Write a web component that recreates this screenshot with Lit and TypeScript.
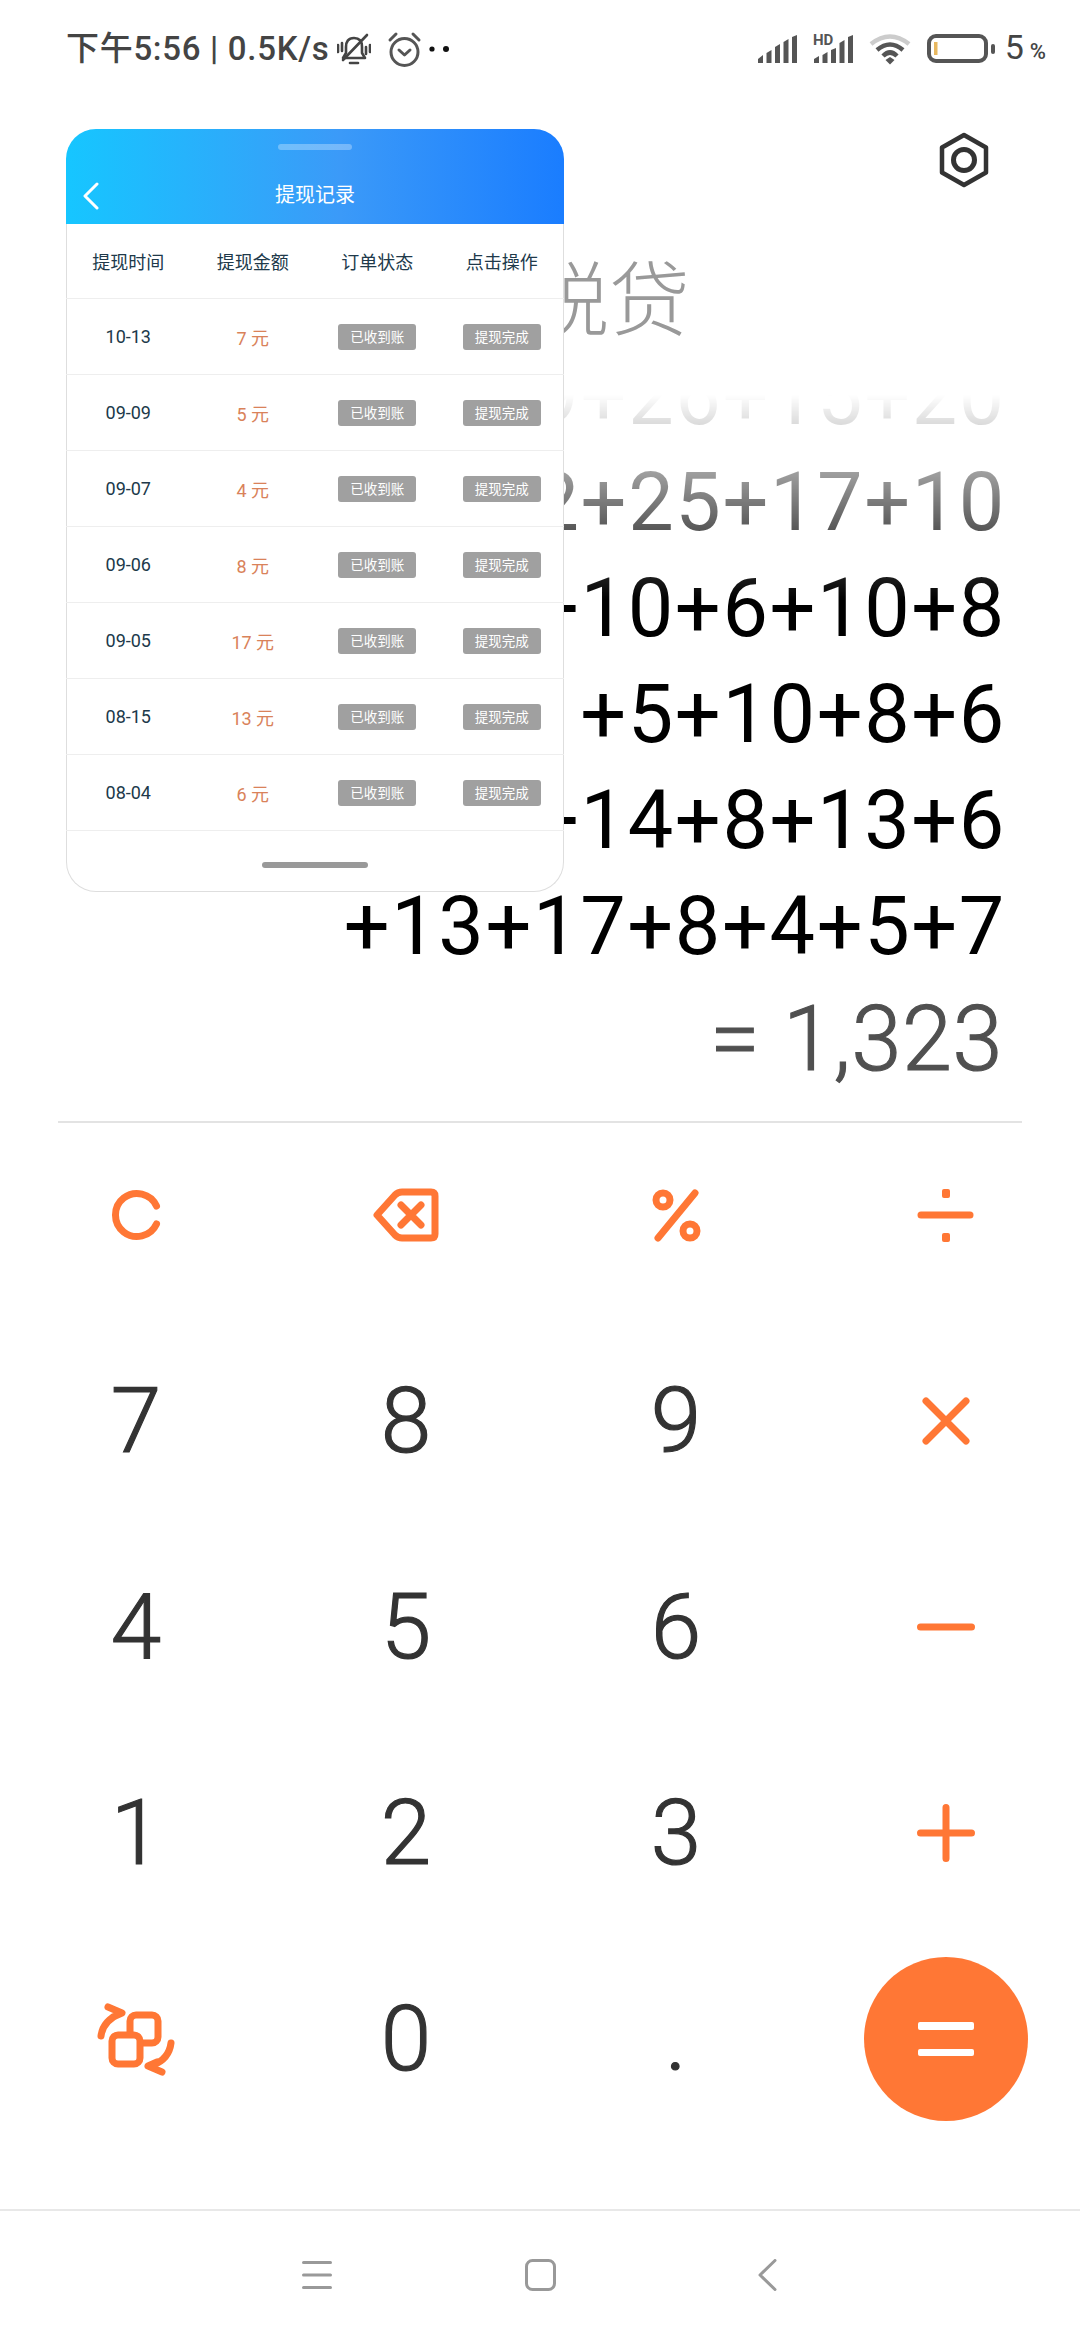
import { LitElement, html, css, svg } from "lit";
import { customElement } from "lit/decorators.js";

const records = [
  ["10-13", "7"], ["09-09", "5"], ["09-07", "4"], ["09-06", "8"],
  ["09-05", "17"], ["08-15", "13"], ["08-04", "6"],
];
const lines = ["9+26+15+20", "2+25+17+10", "+10+6+10+8", "+5+10+8+6", "+14+8+13+6", "+13+17+8+4+5+7"];

const opSvg = (body: unknown, w = 60, h = 60) => html`<svg class="op" width=${w} height=${h} viewBox="0 0 ${w} ${h}">${body}</svg>`;

const keys: unknown[] = [
  opSvg(svg`<path d="M50.5 21A21.5 21.5 0 1 0 50.5 39"/>`),
  opSvg(svg`<path d="M6 30L24 10Q27 7 31 7H60Q64 7 64 11V49Q64 53 60 53H31Q27 53 24 50Z"/><path d="M30 20L50 40M50 20L30 40"/>`, 70, 60),
  opSvg(svg`<circle cx="17" cy="15" r="7"/><circle cx="44" cy="46" r="7"/><path d="M49 8L12 53"/>`),
  opSvg(svg`<path d="M5 30H54"/><rect class="solid" x="26" y="4" width="8" height="9" rx="2"/><rect class="solid" x="26" y="48" width="8" height="9" rx="2"/>`),
  "7", "8", "9",
  opSvg(svg`<path d="M10 10L50 50M50 10L10 50"/>`),
  "4", "5", "6",
  opSvg(svg`<path d="M4.5 30H55.5"/>`),
  "1", "2", "3",
  opSvg(svg`<path d="M4.5 30H55.5M30 4.5V55.5"/>`),
  opSvg(svg`<rect x="34" y="16" width="28" height="28" rx="6"/><rect class="blank" x="16" y="36" width="28" height="29" rx="6"/><path d="M5 37Q7 22 23 15M12 8L26 14L17 18M75 44Q73 60 57 66M66 73L52 67L61 63"/>`, 80, 80),
  "0", ".",
];

@customElement("app-root")
export class AppRoot extends LitElement {
  static styles = css`
    :host { display: block; width: 1080px; height: 2340px; position: relative; background: #fff; overflow: hidden;
      font-family: Roboto, "Noto Sans CJK SC", sans-serif; }
    * { box-sizing: border-box; }
    svg { display: block; flex-shrink: 0; }

    .status { height: 98px; display: flex; align-items: center; padding: 0 34px 0 66px; color: #444; }
    .clock { font-size: 33px; letter-spacing: .7px; font-weight: 500; width: 271px; white-space: nowrap; line-height: 40px; }
    .bell { margin-right: 16px; }
    .more { margin-left: 6px; }
    .right { margin-left: auto; display: flex; align-items: center; }
    .sig2 { margin-left: 15px; }
    .wifi { margin-left: 15px; }
    .batt { margin-left: 16px; }
    .pct { font-size: 34px; margin-left: 10px; line-height: 40px; }
    .pct small { font-size: 22px; font-weight: 500; margin-left: 6px; }

    .tools { height: 124px; display: flex; align-items: center; justify-content: flex-end; padding-right: 90px; }
    .title { margin-top: 39px; height: 134px; padding-right: 390px; text-align: right; font-size: 81px; line-height: 82px; color: #999; font-weight: 300; }

    .expr { height: 585px; overflow: hidden; display: flex; flex-direction: column; justify-content: flex-end; align-items: flex-end;
      padding-right: 74px; color: #000; font-size: 81px; letter-spacing: 1.6px; line-height: 106px; white-space: nowrap; flex-shrink: 0;
      -webkit-mask-image: linear-gradient(to bottom, transparent, #000 205px); mask-image: linear-gradient(to bottom, transparent, #000 205px); }
    .expr div { flex-shrink: 0; }
    .result { margin-top: 7px; padding-right: 77px; text-align: right; font-size: 90px; letter-spacing: .6px; line-height: 106px; color: #505050; font-weight: 300; -webkit-text-stroke: 1.2px #505050; }
    .rule { height: 2px; margin: 28px 58px 0; background: #e3e3e3; }

    .pad { height: 1086px; padding: 42px 0 0 1px; display: grid; grid-template-columns: 270px 270px 270px 269px; grid-auto-rows: 100px; row-gap: 106px; align-content: start; }
    .key { display: flex; align-items: center; justify-content: center; font-size: 91px; font-weight: 300; -webkit-text-stroke: 1.2px #333; color: #333; line-height: 100px; }
    .op { fill: none; stroke: #ff7735; stroke-width: 7; stroke-linecap: round; stroke-linejoin: round; }
    .op .solid { fill: #ff7735; stroke: none; }
    .op .blank { fill: #fff; }
    .eq { width: 164px; height: 164px; border-radius: 50%; background: #ff7735; flex-shrink: 0; display: flex; flex-direction: column; align-items: center; justify-content: center; gap: 19px; }
    .eq i { display: block; width: 56px; height: 7.5px; border-radius: 2px; background: #fff; }

    .nav { height: 130px; border-top: 2px solid #e8e8e8; display: flex; align-items: center; padding-left: 302px; }
    .nav svg { fill: none; stroke: #999; stroke-width: 3; stroke-linecap: round; stroke-linejoin: round; }
    .nav .home { margin-left: 193px; }
    .nav .back { margin-left: 202px; }

    .card { position: absolute; left: 66px; top: 129px; width: 498px; height: 763px; display: flex; flex-direction: column; }
    .head { height: 95px; flex-shrink: 0; border-radius: 30px 30px 0 0; background: linear-gradient(90deg, #16c6ff, #3b9af8 55%, #1a7dff);
      color: #fff; display: flex; flex-direction: column; align-items: center; position: relative; }
    .grip { width: 74px; height: 6px; margin-top: 15px; border-radius: 3px; background: rgba(255,255,255,.3); }
    .head h1 { margin: 30px 0 0; font-size: 20px; line-height: 30px; font-weight: 400; }
    .chev { position: absolute; left: 17px; top: 53px; fill: none; stroke: #fff; stroke-width: 3; stroke-linecap: round; stroke-linejoin: round; }
    .body { flex: 1; background: #fff; border: 1px solid #dedede; border-top: 0; border-radius: 0 0 30px 30px; display: flex; flex-direction: column; align-items: stretch; }
    .row { display: grid; grid-template-columns: repeat(4, 1fr); height: 76px; align-items: center; justify-items: center; border-bottom: 1px solid #eee; font-size: 18px; color: #20394a; margin: 0 -1px; flex-shrink: 0; }
    .row.top { height: 75px; }
    .amt { color: #d9825a; font-size: 18px; }
    .tag { width: 78px; height: 26px; border-radius: 3px; background: #a0a0a0; color: #fff; font-size: 13.5px; line-height: 26px; text-align: center; }
    .bar { width: 106px; height: 6px; border-radius: 3px; background: #999; margin: 31px auto 0; }
  `;

  private bars() {
    return svg`<g fill="#555">
      <path d="M0 28V24L5 20V28Z"/><path d="M8.5 28V18L13.5 15V28Z"/><path d="M17 28V12L22 9V28Z"/><path d="M25.5 28V7L30.5 4V28Z"/><path d="M34 28V2L39 0V28Z"/>
    </g>`;
  }

  render() {
    return html`
      <div class="status">
        <div class="clock">下午5:56 | 0.5K/s</div>
        <svg class="bell" width="34" height="34" viewBox="0 0 34 34" fill="none" stroke="#444" stroke-width="2.6" stroke-linecap="round" stroke-linejoin="round">
          <path d="M17 6C11 6 9 10 9 15V21L6 26H28L25 21V15C25 10 23 6 17 6Z"/><path d="M13 31H21"/><path d="M30 3L6 28"/><path d="M1 13V20M5 11V19M33 13V20M29 15V22"/>
        </svg>
        <svg width="36" height="36" viewBox="0 0 36 36" fill="none" stroke="#555" stroke-width="3" stroke-linecap="round" stroke-linejoin="round">
          <circle cx="17.5" cy="21" r="13.5"/><path d="M3 9L9 3M32 9L26 3M12 19L17.5 24L23 19"/>
        </svg>
        <svg class="more" width="22" height="8" viewBox="0 0 22 8" fill="#111"><circle cx="3" cy="4" r="2.6"/><circle cx="17" cy="4" r="3"/></svg>
        <div class="right">
          <svg width="40" height="28" viewBox="0 0 40 28">${this.bars()}</svg>
          <svg class="sig2" width="41" height="30" viewBox="0 -1 41 30">
            <g transform="translate(1,0)" fill="#555">
              <path d="M0 28V24L5 21V28Z"/><path d="M8.5 28V20L13.5 17V28Z"/><path d="M17 28V15L22 13V28Z"/><path d="M25.5 28V8L30.5 5V28Z"/><path d="M34 28V2L39 0V28Z"/>
            </g>
            <text x="0" y="10" font-size="15" font-weight="700" fill="#555" font-family="Roboto">HD</text>
          </svg>
          <svg class="wifi" width="42" height="32" viewBox="0 0 42 32" fill="none" stroke-linecap="butt">
            <path d="M2 11Q21 -4 40 11" stroke="#ccc" stroke-width="4.5"/>
            <path d="M8 17Q21 6 34 17" stroke="#555" stroke-width="4.5"/>
            <path d="M14 23Q21 16 28 23" stroke="#555" stroke-width="4.5"/>
            <path d="M16.5 27L21 24L25.5 27L21 31.5Z" fill="#555"/>
          </svg>
          <svg class="batt" width="68" height="30" viewBox="0 0 68 30">
            <rect x="2" y="2" width="57" height="25" rx="7" fill="none" stroke="#555" stroke-width="4"/>
            <rect x="7" y="8" width="3.5" height="13" fill="#e8b860"/>
            <rect x="64" y="10" width="4" height="10" rx="2" fill="#555"/>
          </svg>
          <div class="pct">5<small>%</small></div>
        </div>
      </div>

      <div class="tools">
        <svg width="52" height="58" viewBox="-2 -2 52 58" fill="none" stroke="#333" stroke-width="4.5" stroke-linejoin="round">
          <path d="M24 2L46 14.5V39.5L24 52L2 39.5V14.5Z"/><circle cx="24" cy="27" r="10.5" stroke-width="5"/>
        </svg>
      </div>
      <div class="title">税贷</div>
      <div class="expr">${lines.map((l) => html`<div>${l}</div>`)}</div>
      <div class="result">= 1,323</div>
      <div class="rule"></div>

      <div class="pad">
        ${keys.map((k) => html`<div class="key">${k}</div>`)}
        <div class="key"><div class="eq"><i></i><i></i></div></div>
      </div>

      <div class="nav">
        <svg width="30" height="30" viewBox="0 0 30 30"><path d="M1.5 2.5H28.5M1.5 15H28.5M1.5 27.5H28.5"/></svg>
        <svg class="home" width="31" height="32" viewBox="0 0 31 32"><rect x="1.5" y="1.5" width="28" height="29" rx="6"/></svg>
        <svg class="back" width="19" height="32" viewBox="0 0 19 32"><path d="M17 1.5L2 16L17 30.5"/></svg>
      </div>

      <section class="card">
        <div class="head">
          <div class="grip"></div>
          <h1>提现记录</h1>
          <svg class="chev" width="18" height="28" viewBox="0 0 18 28"><path d="M14 2L2 14L14 26"/></svg>
        </div>
        <div class="body">
          <div class="row top"><span>提现时间</span><span>提现金额</span><span>订单状态</span><span>点击操作</span></div>
          ${records.map(([d, a]) => html`<div class="row"><span>${d}</span><span class="amt">${a} 元</span><span class="tag">已收到账</span><span class="tag">提现完成</span></div>`)}
          <div class="bar"></div>
        </div>
      </section>
    `;
  }
}
